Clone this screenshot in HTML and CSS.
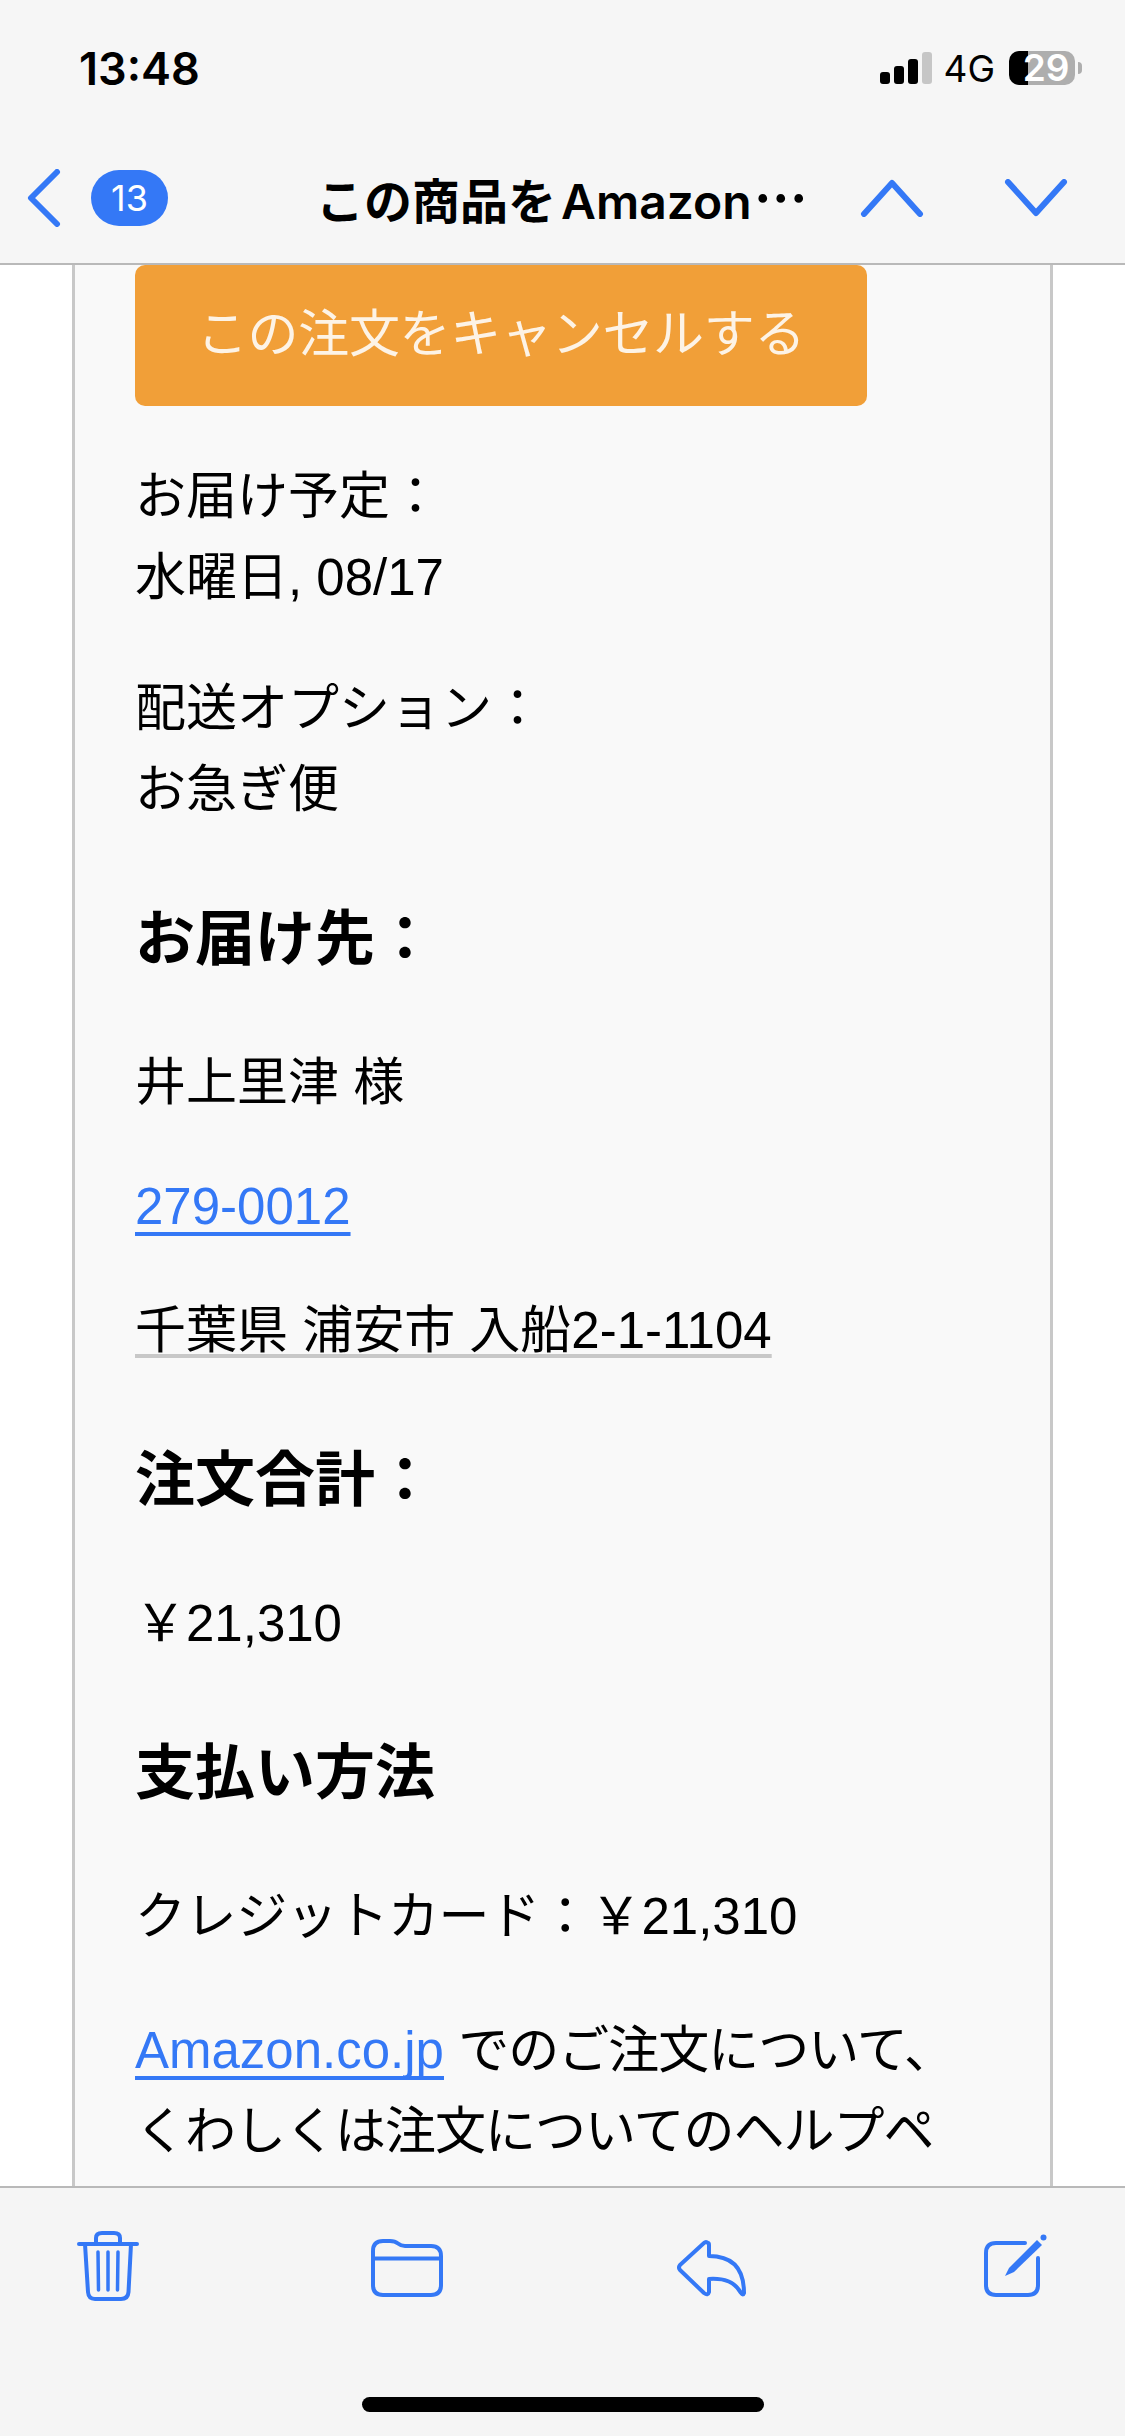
FILE: index.html
```html
<!DOCTYPE html>
<html lang="ja">
<head>
    <meta charset="UTF-8">
    <meta name="viewport" content="width=device-width, initial-scale=1.0">
    <title>Mail</title>
    <link rel="stylesheet" href="styles.css">
</head>
<body>
    <div class="phone">
        <header class="top-bar">
            <div class="status-bar">
                <span class="time">13:48</span>
                <div class="status-icons">
                    <div class="signal">
                        <span class="bar bar-1"></span>
                        <span class="bar bar-2"></span>
                        <span class="bar bar-3"></span>
                        <span class="bar bar-4"></span>
                    </div>
                    <span class="network">4G</span>
                    <div class="battery"><span class="battery-level">29</span></div>
                    <span class="battery-nub"></span>
                </div>
            </div>
            <nav class="nav-bar">
                <svg class="icon-back" width="34" height="58" viewBox="0 0 34 58">
                    <path d="M30 3L4 29L30 55" />
                </svg>
                <span class="badge">13</span>
                <h1 class="nav-title">この商品を Amazon<span class="dots">…</span></h1>
                <svg class="icon-arrow icon-up" width="64" height="38" viewBox="0 0 64 38">
                    <path d="M4 35L32 4L60 35" />
                </svg>
                <svg class="icon-arrow icon-down" width="64" height="38" viewBox="0 0 64 38">
                    <path d="M4 3L32 34L60 3" />
                </svg>
            </nav>
        </header>

        <main class="mail-body">
            <div class="mail-card">
                <a class="cancel-button">この注文をキャンセルする</a>

                <p class="info">お届け予定：<br>水曜日, 08/17</p>
                <p class="info">配送オプション：<br>お急ぎ便</p>

                <h2>お届け先：</h2>
                <p class="address">井上里津 様</p>
                <p class="address"><a class="link">279-0012</a></p>
                <p class="address"><span class="address-line">千葉県 浦安市 入船2-1-1104</span></p>

                <h2>注文合計：</h2>
                <p class="info">￥21,310</p>

                <h2>支払い方法</h2>
                <p class="info"><span class="slight">クレジットカード：</span>￥21,310</p>
                <p class="info help"><a class="link">Amazon.co.jp</a> <span class="tight">でのご注文について、<br>くわしくは注文についてのヘルプペ<br>ージをご覧ください。</span></p>
            </div>
        </main>

        <footer class="toolbar">
            <div class="toolbar-icons">
                <svg class="tool-icon tool-trash" width="62" height="71" viewBox="0 0 62 71">
                    <path d="M2 14H60" />
                    <path d="M8 14L11 62Q11.500 69 18 69H44Q51 69 51.500 62L54 14" />
                    <path d="M19 14V8Q19 3 25 3H37Q43 3 43 8V14" />
                    <path class="thin" d="M21 22L21.500 60M31 22V60M41 22L40.500 60" />
                </svg>
                <svg class="tool-icon tool-folder" width="72" height="58" viewBox="0 0 72 58">
                    <path d="M2 12Q2 2 12 2H19Q24 2 27 4.500Q30 7 34 7H60Q70 7 70 17V46Q70 56 60 56H12Q2 56 2 46Z" />
                    <path d="M2 19.500H70" />
                </svg>
                <svg class="tool-icon tool-reply" width="69" height="58" viewBox="0 0 69 58">
                    <path d="M31 4Q29 2 27 4L3 26Q1 28.500 3 31L27 54Q31 57 32 53V40C48 39 58 43 64 54Q66 57 67 54C67 32 58 17 32 17V6Q32 4 31 4Z" />
                </svg>
                <svg class="tool-icon tool-compose" width="63" height="63" viewBox="0 0 63 63">
                    <path d="M41 9H12Q2 9 2 19V51Q2 61 12 61H44Q54 61 54 51V24" />
                    <path class="pen" d="M21 42L25 34L53 6L58 11L30 38Z" />
                    <circle class="pen" cx="59.500" cy="3.500" r="3" />
                </svg>
            </div>
            <div class="home-bar"></div>
        </footer>
    </div>
</body>
</html>
```

FILE: styles.css
```css
* {
    box-sizing: border-box;
}

body {
    margin: 0;
    background-color: #fff;
    font-family: "Liberation Sans", "Noto Sans CJK JP", sans-serif;
    color: #000;
}

.phone {
    display: flex;
    flex-direction: column;
    width: 1125px;
    height: 2436px;
    overflow: hidden;
}

/* top bars */
.top-bar {
    height: 265px;
    flex-shrink: 0;
    background-color: #f6f6f6;
    border-bottom: 2px solid #b9b9b9;
}

.status-bar {
    display: flex;
    justify-content: space-between;
    align-items: center;
    height: 68px;
    margin-top: 34px;
    padding: 0 43px 0 79px;
}

.time {
    font-family: Inter, "Liberation Sans", sans-serif;
    font-size: 45px;
    font-weight: 600;
}

.status-icons {
    display: flex;
    align-items: center;
}

.signal {
    display: flex;
    align-items: flex-end;
    gap: 4px;
    height: 32px;
    margin-right: 11px;
}

.bar {
    width: 10px;
    border-radius: 3px;
    background-color: #000;
}

.bar-1 { height: 12px; }
.bar-2 { height: 18px; }
.bar-3 { height: 25px; }
.bar-4 { height: 32px; background-color: #c6c6c6; }

.network {
    font-family: Inter, "Liberation Sans", sans-serif;
    font-size: 37px;
    margin-right: 14px;
}

.battery {
    width: 66px;
    height: 34px;
    border-radius: 10px;
    background: linear-gradient(to right, #000 19px, #aeaeae 19px);
    text-align: center;
}

.battery-level {
    font-family: Inter, "Liberation Sans", sans-serif;
    font-size: 37px;
    font-weight: 600;
    line-height: 34px;
    color: #fff;
    display: block;
    padding-left: 8px;
}

.battery-nub {
    width: 4px;
    height: 12px;
    margin-left: 3px;
    border-radius: 0 6px 6px 0;
    background-color: #aeaeae;
}

.nav-bar {
    display: flex;
    align-items: center;
    height: 58px;
    margin-top: 67px;
    padding-left: 27px;
}

.icon-back path,
.icon-arrow path {
    fill: none;
    stroke: #3478f6;
    stroke-width: 6;
    stroke-linecap: round;
    stroke-linejoin: round;
}

.badge {
    width: 77px;
    height: 56px;
    margin-left: 30px;
    border-radius: 28px;
    background-color: #3478f6;
    color: #fff;
    font-family: Inter, "Liberation Sans", sans-serif;
    font-size: 36px;
    line-height: 56px;
    text-align: center;
}

.nav-title {
    width: 494px;
    margin: 0 0 6px 148px;
    font-family: Inter, "Noto Sans CJK JP", sans-serif;
    font-size: 48px;
    font-weight: 600;
    word-spacing: -7px;
    white-space: nowrap;
}

.dots {
    margin-left: 2px;
    font-family: "Noto Sans CJK JP", sans-serif;
    font-size: 54px;
}

.icon-up {
    margin-left: 50px;
}

.icon-down {
    margin-left: 80px;
}

/* mail content */
.mail-body {
    flex: 1;
    overflow: hidden;
    padding: 0 72px;
}

.mail-card {
    width: 981px;
    min-height: 100%;
    padding: 0 60px;
    background-color: #f9f9f9;
    border-left: 3px solid #c8c8c8;
    border-right: 3px solid #c8c8c8;
    font-size: 51px;
    line-height: 81px;
}

.cancel-button {
    display: block;
    width: 732px;
    height: 141px;
    border-radius: 10px;
    background-color: #f19f38;
    color: #fdf3e6;
    font-size: 51px;
    letter-spacing: -0.3px;
    line-height: 139px;
    text-align: center;
}

.info {
    margin: 50px 0 0;
}

.address {
    margin: 43px 0 0;
}

.mail-card h2 {
    margin: 69px 0 0;
    font-size: 60px;
    font-weight: 700;
    line-height: 81px;
}

.mail-card h2 + p {
    margin-top: 62px;
}

.mail-card .help {
    margin-top: 53px;
}

.slight {
    letter-spacing: -0.4px;
}

.tight {
    letter-spacing: -1px;
}

.link {
    color: #3478f6;
    text-decoration: underline;
    text-decoration-thickness: 4px;
    text-decoration-skip-ink: none;
    text-underline-offset: 8px;
}

.address-line {
    text-decoration: underline #c8c8c8;
    text-decoration-thickness: 4px;
    text-decoration-skip-ink: none;
    text-underline-offset: 6px;
}

/* bottom toolbar */
.toolbar {
    height: 250px;
    flex-shrink: 0;
    background-color: #f5f5f5;
    border-top: 2px solid #b9b9b9;
}

.toolbar-icons {
    display: flex;
    align-items: flex-start;
    height: 113px;
    padding: 42px 0 0 77px;
}

.tool-icon path {
    fill: none;
    stroke: #3478f6;
    stroke-width: 4;
    stroke-linecap: round;
    stroke-linejoin: round;
}

.tool-icon .thin {
    stroke-width: 3.500;
}

.tool-icon .pen {
    fill: #3478f6;
    stroke: none;
}

.tool-folder {
    margin: 9px 0 0 232px;
}

.tool-reply {
    margin: 9px 0 0 234px;
}

.tool-compose {
    margin: 4px 0 0 238px;
}

.home-bar {
    width: 402px;
    height: 15px;
    margin: 96px auto 0;
    border-radius: 8px;
    background-color: #000;
}
```
